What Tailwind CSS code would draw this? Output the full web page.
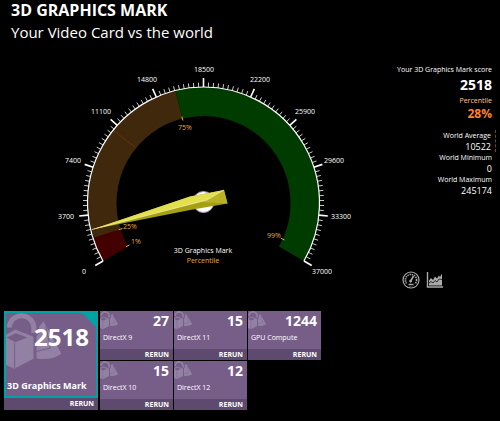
<!DOCTYPE html>
<html lang="en">
<head>
    <meta charset="UTF-8" />
    <title>3D Graphics Mark</title>
    <meta name="viewport" content="width=device-width, initial-scale=1.0">
    <script src="https://cdn.jsdelivr.net/npm/@tailwindcss/browser@4"></script>
</head>
<body class="bg-black text-white font-['Open_Sans','Noto_Sans',sans-serif]">
    <!-- Shapes used on every tile -->
    <svg class="hidden">
        <symbol id="shapes" viewBox="0 0 175 175">
            <path d="M10 44A37 37 0 0 1 84 46V60" fill="none" stroke="currentColor" stroke-width="15" />
            <path fill-rule="evenodd" d="M0 66L28 50L83 72V138L25 168L0 157ZM2 74L28 88L64 74L30 61Z" fill="currentColor" />
            <path d="M26 90V166" stroke="#765e89" stroke-width="3" />
            <path d="M113 25L167 122Q140 144 92 137V72L100 60V42Z" fill="currentColor" />
            <path d="M120 40L134 106L92 116" fill="none" stroke="#765e89" stroke-width="3" />
        </symbol>
    </svg>

    <!-- Header -->
    <header class="px-[11px]">
        <h1 class="text-[16px] leading-5 font-bold">3D GRAPHICS MARK</h1>
        <p class="text-[15px] leading-[25px]">Your Video Card vs the world</p>
    </header>

    <main>
        <section class="flex">
            <!-- Gauge -->
            <svg id="gauge" class="shrink-0" width="370" height="266" viewBox="0 45 370 266" font-size="7" fill="white" text-anchor="middle">
                <g id="bands" fill="none" stroke-width="29"></g>
                <path d="M114 131L136 148" stroke="#8a3a10" stroke-width="1" stroke-dasharray="1 1" />
                <g id="ticks" stroke="white"></g>
                <g id="labels"></g>
                <g id="percent-ticks" stroke="#e8a838"></g>
                <g fill="#eca63c">
                    <text x="185" y="130">75%</text>
                    <text x="130" y="229">25%</text>
                    <text x="136" y="244">1%</text>
                    <text x="274" y="238">99%</text>
                    <text x="203" y="263">Percentile</text>
                </g>
                <text x="203" y="253">3D Graphics Mark</text>
                <circle cx="203.5" cy="202" r="10.5" fill="white" stroke="#b48ac0" />
                <path d="M92 229.5L190 196.5L224 190L227.5 203.5L190 210Z" fill="#a5a012" />
                <path d="M92 229.5L190 196.5L224 190L207 200Z" fill="#e2e04c" />
                <path d="M224 190L227.5 203.5L200 202L207 200Z" fill="#b8b224" />
                <path d="M92 229.5L207 200L224 190" fill="none" stroke="#f0eeb0" stroke-width="0.8" />
            </svg>

            <!-- Scores -->
            <aside class="flex-1 flex flex-col pt-[19px] pb-[22px] pr-2 text-right text-[7px] leading-[11px] whitespace-nowrap">
                <p>Your 3D Graphics Mark score</p>
                <p class="text-[14px] leading-5 font-bold">2518</p>
                <p class="text-[#ffc890]">Percentile</p>
                <p class="text-[12px] leading-4 font-bold text-[#ff8228]">28%</p>
                <dl class="mt-2">
                    <div class="-mr-1 pr-1 border-r border-dashed border-[#803a28]">
                        <dt>World Average</dt>
                        <dd class="text-[9px] leading-[11px]">10522</dd>
                    </div>
                    <dt>World Minimum</dt>
                    <dd class="text-[9px] leading-[11px]">0</dd>
                    <dt>World Maximum</dt>
                    <dd class="text-[9px] leading-[11px]">245174</dd>
                </dl>
                <div class="mt-auto pl-8 flex gap-1.5 text-[#aaa]">
                    <button aria-label="Gauge view">
                        <svg width="18" height="18" viewBox="0 0 18 18" fill="none" stroke="currentColor">
                            <circle cx="9" cy="9" r="8" stroke-width="1.2" />
                            <circle cx="9" cy="9" r="5.6" stroke-width="1.6" stroke-dasharray="1.4 0.8" />
                            <path d="M4 12.5H14V15H4Z" fill="black" stroke="none" />
                            <path d="M6.5 13.5H11.5" stroke-width="1.4" />
                            <path d="M8.5 10.5L11.5 5" stroke-width="1.6" />
                            <circle cx="8.6" cy="10.2" r="1" fill="currentColor" />
                        </svg>
                    </button>
                    <button aria-label="Chart view">
                        <svg width="18" height="18" viewBox="0 0 18 18" fill="none" stroke="currentColor">
                            <path d="M1.5 1V16H17" stroke-width="1.4" />
                            <path d="M3 14.5V9.5L5 7L7 9L9 5.5L11 7.5L13 4.5L14 6L16 2.5V14.5Z" fill="currentColor" stroke="none" />
                            <path d="M3 12L5 10.5L7 12L9 9.5L11 11L13 8L16 8.5" stroke="#222" stroke-width="0.9" />
                        </svg>
                    </button>
                </div>
            </aside>
        </section>

        <!-- Result tiles -->
        <section class="pl-1 flex gap-0.5">
            <article class="relative w-[94px] flex flex-col bg-[#5d4a6e]">
                <div class="relative flex-1 border-2 border-[#00a3a3] bg-[#765e89] overflow-hidden">
                    <svg class="absolute left-0 top-0 text-[#9281a3]" width="58" height="58"><use href="#shapes" /></svg>
                    <svg class="absolute right-0 top-0" width="14" height="14"><path d="M0 0H14V14Z" fill="#00a3a3" /></svg>
                    <p class="relative pt-2.5 pr-[7px] text-right text-[24px] leading-7 font-bold">2518</p>
                    <h2 class="absolute left-px bottom-1 text-[9px] leading-3 font-bold">3D Graphics Mark</h2>
                </div>
                <button class="h-3 pr-1 text-right text-[7px] leading-3 font-bold">RERUN</button>
            </article>

            <div class="grid grid-cols-[repeat(3,73px)] gap-px">
                <article class="relative bg-[#765e89]">
                    <svg class="absolute left-0 top-0 text-[#9281a3]" width="19" height="19"><use href="#shapes" /></svg>
                    <p class="relative pr-1 text-right text-[14px] leading-5 font-bold">27</p>
                    <h2 class="pl-[3px] pb-1 text-[7px] leading-[14px]">DirectX 9</h2>
                    <button class="block w-full h-[11px] pr-1 text-right text-[7px] leading-[11px] font-bold bg-[#5d4a6e]">RERUN</button>
                </article>
                <article class="relative bg-[#765e89]">
                    <svg class="absolute left-0 top-0 text-[#9281a3]" width="19" height="19"><use href="#shapes" /></svg>
                    <p class="relative pr-1 text-right text-[14px] leading-5 font-bold">15</p>
                    <h2 class="pl-[3px] pb-1 text-[7px] leading-[14px]">DirectX 11</h2>
                    <button class="block w-full h-[11px] pr-1 text-right text-[7px] leading-[11px] font-bold bg-[#5d4a6e]">RERUN</button>
                </article>
                <article class="relative bg-[#765e89]">
                    <svg class="absolute left-0 top-0 text-[#9281a3]" width="19" height="19"><use href="#shapes" /></svg>
                    <p class="relative pr-1 text-right text-[14px] leading-5 font-bold">1244</p>
                    <h2 class="pl-[3px] pb-1 text-[7px] leading-[14px]">GPU Compute</h2>
                    <button class="block w-full h-[11px] pr-1 text-right text-[7px] leading-[11px] font-bold bg-[#5d4a6e]">RERUN</button>
                </article>
                <article class="relative bg-[#765e89]">
                    <svg class="absolute left-0 top-0 text-[#9281a3]" width="19" height="19"><use href="#shapes" /></svg>
                    <p class="relative pr-1 text-right text-[14px] leading-5 font-bold">15</p>
                    <h2 class="pl-[3px] pb-1 text-[7px] leading-[14px]">DirectX 10</h2>
                    <button class="block w-full h-[11px] pr-1 text-right text-[7px] leading-[11px] font-bold bg-[#5d4a6e]">RERUN</button>
                </article>
                <article class="relative bg-[#765e89]">
                    <svg class="absolute left-0 top-0 text-[#9281a3]" width="19" height="19"><use href="#shapes" /></svg>
                    <p class="relative pr-1 text-right text-[14px] leading-5 font-bold">12</p>
                    <h2 class="pl-[3px] pb-1 text-[7px] leading-[14px]">DirectX 12</h2>
                    <button class="block w-full h-[11px] pr-1 text-right text-[7px] leading-[11px] font-bold bg-[#5d4a6e]">RERUN</button>
                </article>
            </div>
        </section>
    </main>

    <script>
        const CX = 203.5, CY = 203, R = 116;

        // angle in degrees, 0 = straight up
        function point(r, angle) {
            const a = angle * Math.PI / 180;
            return (CX + r * Math.sin(a)).toFixed(2) + " " + (CY - r * Math.cos(a)).toFixed(2);
        }

        function arc(r, from, to) {
            const large = to - from > 180 ? 1 : 0;
            return `M${point(r, from)}A${r} ${r} 0 ${large} 1 ${point(r, to)}`;
        }

        // Coloured bands
        document.getElementById("bands").innerHTML = [
            [-120, -107.5, "#420000"],
            [-107.5, -14, "#40280c"],
            [-14, 120, "#003c00"],
        ].map(([from, to, color]) => `<path d="${arc(101.5, from, to)}" stroke="${color}" />`).join("");

        // Scale: ten steps with nine small ticks in each
        let ticks = `<path d="${arc(R, -120, 120)}" fill="none" stroke-width="1.2" />`;
        for (let i = 0; i <= 100; i++) {
            const angle = -120 + i * 2.4;
            const major = i % 10 === 0;
            ticks += `<path d="M${point(R, angle)}L${point(major ? 125 : 120.5, angle)}" stroke-width="${major ? 1.6 : 0.8}" />`;
        }
        document.getElementById("ticks").innerHTML = ticks;

        document.getElementById("labels").innerHTML = [
            [0, 84, 274], [3700, 66, 219], [7400, 73, 163], [11100, 101, 114], [14800, 147, 82], [18500, 204, 72],
            [22200, 260, 82], [25900, 305, 114], [29600, 334, 163], [33300, 341, 219], [37000, 322, 274],
        ].map(([value, x, y]) => `<text x="${x}" y="${y}">${value}</text>`).join("");

        document.getElementById("percent-ticks").innerHTML = [-119.5, -107.5, -14, 114.5]
            .map(angle => `<path d="M${point(85, angle)}L${point(89, angle)}" />`).join("");
    </script>
</body>
</html>
